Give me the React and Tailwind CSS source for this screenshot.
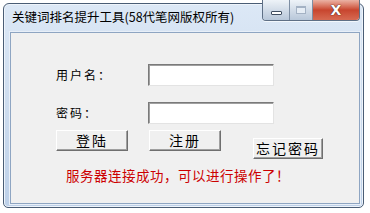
import React from "react";

const cjk = { fontFamily: '"Noto Sans CJK SC", "Noto Sans", sans-serif' };

function CaptionButtons() {
  return (
    <div className="flex h-[21px] -mt-[4px] overflow-hidden rounded-b-[4px] border border-t-0 border-[#5e6f85] shadow-[0_1px_0_#ffffffaa]">
      {/* minimize */}
      <div className="flex w-[27px] items-center justify-center border-r border-[#7d8ea3] bg-gradient-to-b from-[#eef3f8] via-[#d2dce8] to-[#b8c7d9]">
        <div className="mt-[5px] h-[4px] w-[11px] rounded-[1px] border border-[#3f4d60] bg-white" />
      </div>
      {/* maximize (disabled) */}
      <div className="flex w-[23px] items-center justify-center border-r border-[#7d8ea3] bg-gradient-to-b from-[#eef3f8] via-[#d2dce8] to-[#b8c7d9]">
        <div className="h-[8px] w-[10px] border border-[#a4b2c4] border-t-[2px] bg-[#e6edf5]" />
      </div>
      {/* close */}
      <div className="flex w-[46px] items-center justify-center bg-gradient-to-b from-[#eab2a4] via-[#c8452e] to-[#d66a52]">
        <span
          className="text-[14px] font-bold leading-none text-white [text-shadow:0_0_1px_#40201a,0_0_1px_#40201a]"
          style={{ fontFamily: '"DejaVu Sans", sans-serif' }}
        >
          X
        </span>
      </div>
    </div>
  );
}

function SunkenInput() {
  return (
    <div className="h-[22px] w-[126px] border border-t-[#7a7a7a] border-l-[#7a7a7a] border-r-[#e3e3e3] border-b-[#e3e3e3] bg-white shadow-[inset_1px_1px_0_#a0a0a0]" />
  );
}

function Button({ children, className = "" }) {
  return (
    <div
      className={
        "flex h-[21px] items-center justify-center border border-t-white border-l-white border-r-[#6f6f6f] border-b-[#6f6f6f] bg-[#f0f0f0] shadow-[inset_-1px_-1px_0_#a0a0a0] text-[14px] tracking-[2px] text-black " +
        className
      }
      style={cjk}
    >
      {children}
    </div>
  );
}

export default function App() {
  return (
    <div className="h-[213px] w-[370px] overflow-hidden bg-white" style={cjk}>
      <div className="ml-[3px] mt-[3px] flex h-[205px] w-[361px] flex-col rounded-t-[6px] rounded-b-[5px] border border-[#4a5d75] bg-gradient-to-b from-[#dce8f6] via-[#cddcee] to-[#bdd0e8] shadow-[inset_0_0_0_1px_#eef4fb]">
        {/* title bar */}
        <div className="flex h-[28px] shrink-0 items-start pl-[8px] pr-[3px]">
          <span className="mt-[5px] text-[12.5px] leading-[16px] text-black">
            关键词排名提升工具(58代笔网版权所有)
          </span>
          <div className="ml-auto">
            <CaptionButtons />
          </div>
        </div>
        {/* client area */}
        <div className="ml-[6px] mr-[3px] mb-[3px] flex-1 border border-[#8ea5c2] shadow-[0_0_0_1px_#e8eff8]">
          <div className="h-full bg-[#f0f0f0] pl-[45px]">
            <div className="flex items-center pt-[31px]">
              <span className="w-[92px] text-[12px] tracking-[2px] text-black">用户名：</span>
              <SunkenInput />
            </div>
            <div className="mt-[16px] flex items-center">
              <span className="w-[92px] text-[12px] tracking-[2px] text-black">密码：</span>
              <SunkenInput />
            </div>
            <div className="mt-[6px] flex items-start">
              <Button className="w-[72px]">登陆</Button>
              <Button className="ml-[21px] w-[72px]">注册</Button>
              <Button className="ml-[32px] mt-[8px] w-[70px]">忘记密码</Button>
            </div>
            <div className="mt-[7px] pl-[10px] text-[13.5px] leading-[18px] tracking-[0.5px] text-[#cc0000]">
              服务器连接成功，可以进行操作了！
            </div>
          </div>
        </div>
      </div>
    </div>
  );
}
